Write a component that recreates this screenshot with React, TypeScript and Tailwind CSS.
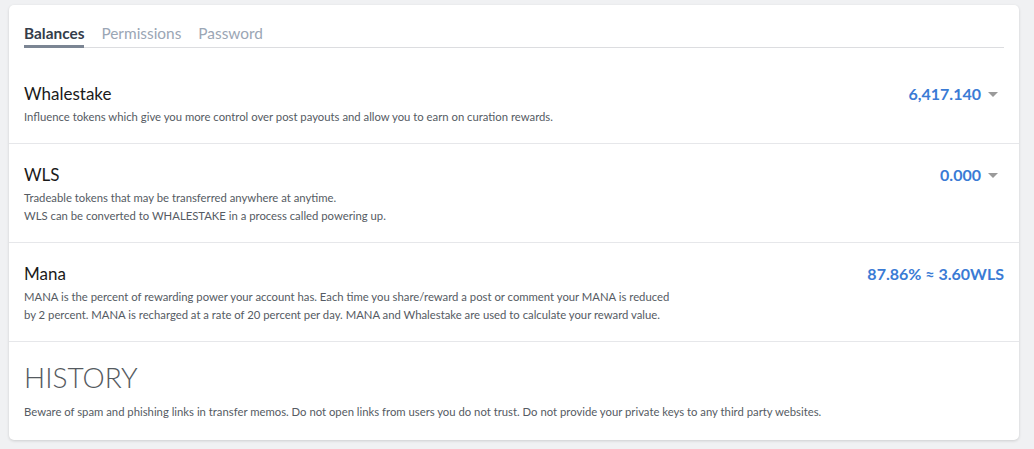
import React from 'react';

const font = { fontFamily: 'Lato, "Noto Sans", sans-serif' };

type Row = { title: string; lines: string[]; value: string; caret: boolean };

const rows: Row[] = [
  {
    title: 'Whalestake',
    lines: ['Influence tokens which give you more control over post payouts and allow you to earn on curation rewards.'],
    value: '6,417.140',
    caret: true,
  },
  {
    title: 'WLS',
    lines: [
      'Tradeable tokens that may be transferred anywhere at anytime.',
      'WLS can be converted to WHALESTAKE in a process called powering up.',
    ],
    value: '0.000',
    caret: true,
  },
  {
    title: 'Mana',
    lines: [
      'MANA is the percent of rewarding power your account has. Each time you share/reward a post or comment your MANA is reduced',
      'by 2 percent. MANA is recharged at a rate of 20 percent per day. MANA and Whalestake are used to calculate your reward value.',
    ],
    value: '87.86% ≈ 3.60WLS',
    caret: false,
  },
];

function Caret() {
  return (
    <svg width="10" height="6" viewBox="0 0 10 6" className="ml-[7px] mt-[1px]">
      <path d="M0 0 L10 0 L5 5 Z" fill="#9a9a9a" />
    </svg>
  );
}

export default function App() {
  return (
    <div className="min-h-screen w-full bg-[#f0f1f3] pl-[9px] pr-[15px] pt-[5px]" style={font}>
      <div className="bg-white rounded-[5px] shadow-[0_1px_3px_rgba(0,0,0,0.15)] h-[435px] flex flex-col">
        <div className="px-[15px] pt-[18px]">
          <div className="flex gap-[17px] border-b border-[#dcdde0] text-[15.4px] leading-[21px]">
            <span className="font-bold text-[#343d4a] border-b-[3px] border-[#7b8593] pb-[1px] -mb-[1px]">Balances</span>
            <span className="text-[#9ba6b5]">Permissions</span>
            <span className="text-[#9ba6b5]">Password</span>
          </div>
        </div>
        <div className="pt-[15px]">
          {rows.map((r) => (
            <div key={r.title} className="border-b border-[#e6e7ea] px-[15px] pt-[19px] pb-[17px] flex justify-between items-start">
              <div>
                <div className="text-[17px] leading-[24px] text-[#1a1a1a]">{r.title}</div>
                <div className="mt-[2px] text-[11.3px] leading-[18px] text-[#555b63]">
                  {r.lines.map((l) => (
                    <div key={l}>{l}</div>
                  ))}
                </div>
              </div>
              <div className="flex items-center h-[24px] text-[16px] font-bold text-[#3a7bd5]">
                <span>{r.value}</span>
                {r.caret && <Caret />}
                {r.caret && <span className="w-[6px]" />}
              </div>
            </div>
          ))}
          <div className="px-[15px] pt-[16px]">
            <div className="text-[28px] leading-[38px] font-light text-[#555a60]">HISTORY</div>
            <div className="mt-[7px] text-[11.3px] leading-[18px] text-[#555b63]">
              Beware of spam and phishing links in transfer memos. Do not open links from users you do not trust. Do not provide your private keys to any third party websites.
            </div>
          </div>
        </div>
      </div>
    </div>
  );
}
